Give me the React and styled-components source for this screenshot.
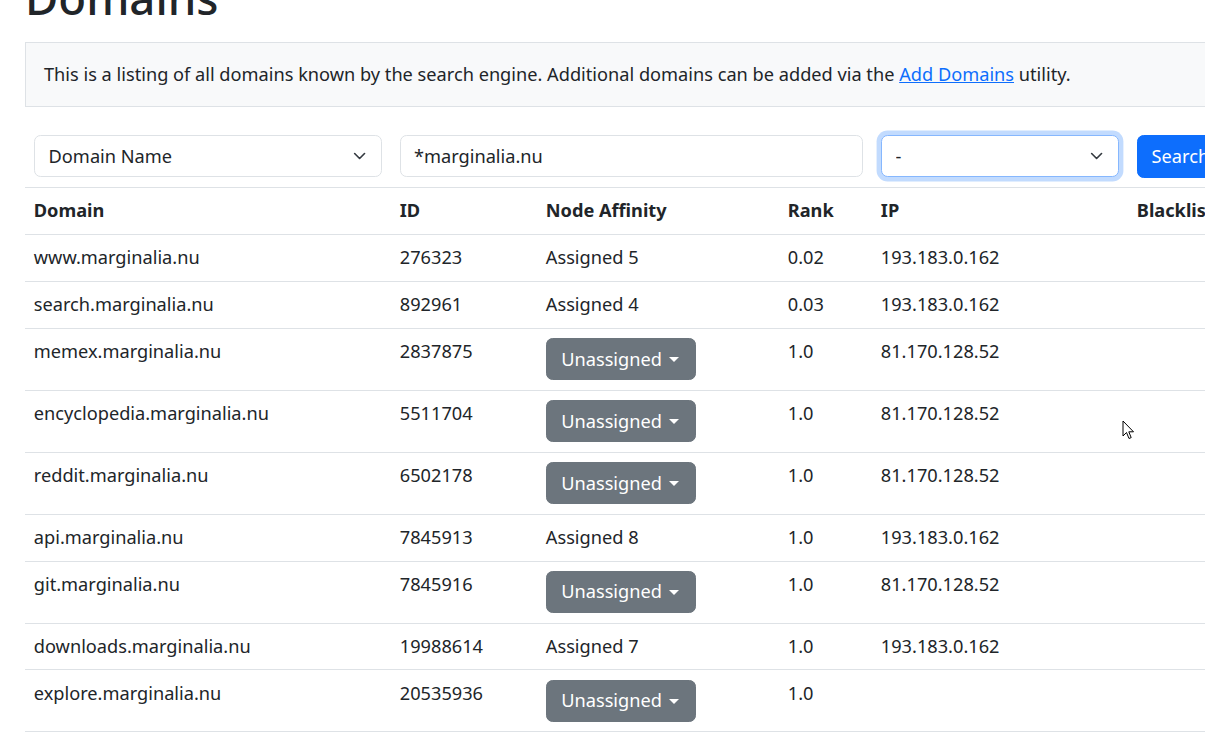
import React from 'react';
import styled, { createGlobalStyle } from 'styled-components';

const Global = createGlobalStyle`
  html, body { margin: 0; padding: 0; overflow: hidden; background: #fff; }
  body {
    font-family: "Noto Sans", "DejaVu Sans", sans-serif;
    font-size: 18.2px;
    line-height: 1.5;
    color: #212529;
  }
  * { box-sizing: border-box; }
`;

const COLS = [366, 146, 242, 93, 256, 300];

const Page = styled.div`
  position: relative;
  width: 1205px;
  height: 739px;
  overflow: hidden;
  padding-left: 25px;
`;

const Inner = styled.div`
  width: ${COLS.reduce((a, b) => a + b, 0)}px;
`;

const Title = styled.h1`
  font-size: 45.6px;
  font-weight: 500;
  line-height: 1.2;
  margin: -30.5px 0 17.8px;
`;

const Notice = styled.div`
  background: #f8f9fa;
  border: 1px solid #dee2e6;
  padding: 17.9px 18px;
`;

const Link = styled.a`
  color: #0d6efd;
  text-decoration: underline;
`;

const Table = styled.table`
  width: 100%;
  table-layout: fixed;
  border-collapse: collapse;
  margin-top: 19px;
`;

const Cell = styled.td`
  padding: 9.3px 8.8px;
  border-bottom: 1px solid #dee2e6;
  vertical-align: top;
  text-align: left;
  white-space: nowrap;
`;

const HeadCell = styled(Cell).attrs({ as: 'th' })`
  font-weight: 700;
`;

const SelectWrap = styled.div`
  position: relative;
`;

const Select = styled.select`
  appearance: none;
  display: block;
  width: 100%;
  height: 42px;
  padding: 6px 40px 6px 13.8px;
  font: inherit;
  color: #212529;
  background: #fff;
  border: 1px solid ${(p) => (p.$focus ? '#86b7fe' : '#dee2e6')};
  border-radius: 6.6px;
  box-shadow: ${(p) => (p.$focus ? '0 0 0 4.4px rgba(13,110,253,.25)' : 'none')};
  outline: none;
`;

const Chevron = styled.svg`
  position: absolute;
  right: 16px;
  top: 50%;
  width: 13.2px;
  height: 13.2px;
  transform: translateY(-50%);
  pointer-events: none;
`;

const Input = styled.input`
  display: block;
  width: 100%;
  height: 42px;
  padding: 6px 13.2px;
  font: inherit;
  color: #212529;
  background: #fff;
  border: 1px solid #dee2e6;
  border-radius: 6.6px;
  outline: none;
`;

const Button = styled.button`
  display: inline-flex;
  align-items: center;
  height: 42.4px;
  padding: ${(p) => (p.$variant === 'primary' ? '0 13.8px' : '0 16.5px 0 14.4px')};
  font: inherit;
  color: #fff;
  background: ${(p) => (p.$variant === 'primary' ? '#0d6efd' : '#6c757d')};
  border: 1px solid ${(p) => (p.$variant === 'primary' ? '#0d6efd' : '#6c757d')};
  border-radius: 6.6px;
  white-space: nowrap;
  cursor: pointer;
`;

const Caret = styled.span`
  display: inline-block;
  margin-left: 7px;
  margin-top: 1px;
  border-top: 5px solid #fff;
  border-left: 5px solid transparent;
  border-right: 5px solid transparent;
`;

const Cursor = styled.svg`
  position: absolute;
  left: 1122px;
  top: 420px;
  width: 13px;
  height: 20px;
`;

const Dropdown = ({ value, focus }) => (
  <SelectWrap>
    <Select $focus={focus} defaultValue={value}>
      <option>{value}</option>
    </Select>
    <Chevron viewBox="0 0 16 16">
      <path d="m2 5 6 6 6-6" fill="none" stroke="#343a40" strokeWidth="2" strokeLinecap="round" strokeLinejoin="round" />
    </Chevron>
  </SelectWrap>
);

const rows = [
  ['www.marginalia.nu', '276323', 5, '0.02', '193.183.0.162'],
  ['search.marginalia.nu', '892961', 4, '0.03', '193.183.0.162'],
  ['memex.marginalia.nu', '2837875', null, '1.0', '81.170.128.52'],
  ['encyclopedia.marginalia.nu', '5511704', null, '1.0', '81.170.128.52'],
  ['reddit.marginalia.nu', '6502178', null, '1.0', '81.170.128.52'],
  ['api.marginalia.nu', '7845913', 8, '1.0', '193.183.0.162'],
  ['git.marginalia.nu', '7845916', null, '1.0', '81.170.128.52'],
  ['downloads.marginalia.nu', '19988614', 7, '1.0', '193.183.0.162'],
  ['explore.marginalia.nu', '20535936', null, '1.0', ''],
];

export default function App() {
  return (
    <>
      <Global />
      <Page>
        <Inner>
          <Title>Domains</Title>
          <Notice>
            This is a listing of all domains known by the search engine. Additional domains can be added via the{' '}
            <Link href="#">Add Domains</Link> utility.
          </Notice>
          <Table>
            <colgroup>
              {COLS.map((w, i) => (
                <col key={i} style={{ width: w }} />
              ))}
            </colgroup>
            <thead>
              <tr>
                <Cell>
                  <Dropdown value="Domain Name" />
                </Cell>
                <Cell colSpan={3}>
                  <Input defaultValue="*marginalia.nu" />
                </Cell>
                <Cell>
                  <Dropdown value="-" focus />
                </Cell>
                <Cell>
                  <Button $variant="primary">Search</Button>
                </Cell>
              </tr>
              <tr>
                <HeadCell>Domain</HeadCell>
                <HeadCell>ID</HeadCell>
                <HeadCell>Node Affinity</HeadCell>
                <HeadCell>Rank</HeadCell>
                <HeadCell>IP</HeadCell>
                <HeadCell>Blacklisted</HeadCell>
              </tr>
            </thead>
            <tbody>
              {rows.map(([name, id, node, rank, ip]) => (
                <tr key={id}>
                  <Cell>{name}</Cell>
                  <Cell>{id}</Cell>
                  <Cell>
                    {node ? (
                      `Assigned ${node}`
                    ) : (
                      <Button>
                        Unassigned
                        <Caret />
                      </Button>
                    )}
                  </Cell>
                  <Cell>{rank}</Cell>
                  <Cell>{ip}</Cell>
                  <Cell />
                </tr>
              ))}
            </tbody>
          </Table>
        </Inner>
        <Cursor viewBox="0 0 13 20">
          <path d="M1 1 L1 16 L4.5 12.5 L7 18.5 L9.2 17.6 L6.8 11.8 L11.5 11.8 Z" fill="#fff" stroke="#000" strokeWidth="1" strokeLinejoin="round" />
        </Cursor>
      </Page>
    </>
  );
}
